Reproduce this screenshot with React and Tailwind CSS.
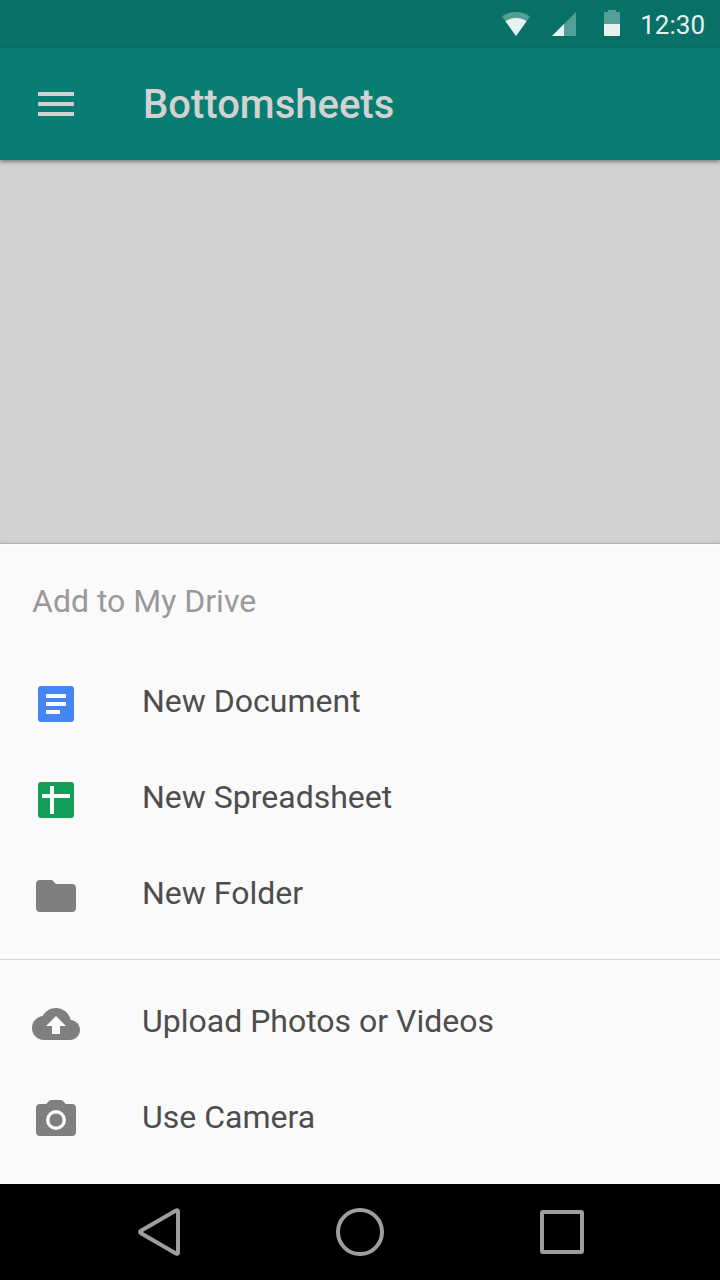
import React from "react";

function WifiIcon() {
  return (
    <svg width="28" height="24" viewBox="0 0 28 24" aria-hidden="true">
      <path d="M14 24L0 4.600C3.800 1.600 8.600 0 14 0s10.200 1.600 14 4.600z" fill="#539e97" />
      <path d="M14 24L3.400 9.200C6.400 7.100 10 6 14 6s7.600 1.100 10.600 3.200z" fill="#e6f1f0" />
    </svg>
  );
}

function SignalIcon() {
  return (
    <svg width="24" height="24" viewBox="0 0 24 24" aria-hidden="true">
      <path d="M0 24L24 0v24z" fill="#539e97" />
      <path d="M0 24L12 12v12z" fill="#e6f1f0" />
    </svg>
  );
}

function BatteryIcon() {
  return (
    <svg width="16" height="26" viewBox="0 0 16 26" aria-hidden="true">
      <path d="M4 0h8v2h3a1 1 0 0 1 1 1v11H0V3a1 1 0 0 1 1-1h3z" fill="#539e97" />
      <path d="M0 14h16v11a1 1 0 0 1-1 1H1a1 1 0 0 1-1-1z" fill="#e6f1f0" />
    </svg>
  );
}

function MenuIcon() {
  return (
    <svg width="48" height="48" viewBox="0 0 48 48" fill="#d1d1d1" aria-hidden="true">
      <path d="M6 12h36v4H6zM6 22h36v4H6zM6 32h36v4H6z" />
    </svg>
  );
}

function DocumentIcon() {
  return (
    <svg width="48" height="48" viewBox="0 0 48 48" aria-hidden="true">
      <rect x="6" y="6" width="36" height="36" rx="3" fill="#4285f4" />
      <path d="M14 14h20v4H14zM14 22h20v4H14zM14 30h14v4H14z" fill="#fafafa" />
    </svg>
  );
}

function SpreadsheetIcon() {
  return (
    <svg width="48" height="48" viewBox="0 0 48 48" aria-hidden="true">
      <rect x="6" y="6" width="36" height="36" rx="3" fill="#129e59" />
      <path d="M18 10h4v8h16v4H22v16h-4V22h-8v-4h8z" fill="#fafafa" />
    </svg>
  );
}

function FolderIcon() {
  return (
    <svg width="48" height="48" viewBox="0 0 48 48" fill="#7f7f7f" aria-hidden="true">
      <path d="M19.500 8H8a4 4 0 0 0-4 4v24a4 4 0 0 0 4 4h32a4 4 0 0 0 4-4V16a4 4 0 0 0-4-4H24l-3.400-3.400Q20 8 19.500 8z" />
    </svg>
  );
}

function UploadIcon() {
  return (
    <svg width="48" height="48" viewBox="0 0 24 24" fill="#7f7f7f" aria-hidden="true">
      <path d="M19.350 10.040C18.670 6.590 15.640 4 12 4 9.110 4 6.600 5.640 5.350 8.040 2.340 8.360 0 10.910 0 14c0 3.310 2.690 6 6 6h13c2.760 0 5-2.240 5-5 0-2.640-2.050-4.780-4.650-4.960zM14 13v4h-4v-4H7l5-5 5 5h-3z" />
    </svg>
  );
}

function CameraIcon() {
  return (
    <svg width="48" height="48" viewBox="0 0 48 48" fill="#7f7f7f" aria-hidden="true">
      <path d="M19.500 4Q18 4 17.200 4.800L14.300 8H8a4 4 0 0 0-4 4v24a4 4 0 0 0 4 4h32a4 4 0 0 0 4-4V12a4 4 0 0 0-4-4h-6.300L30.800 4.800Q30 4 28.500 4z" />
      <circle cx="24" cy="24" r="8.300" fill="none" stroke="#fafafa" strokeWidth="3.400" />
    </svg>
  );
}

const createItems = [
  { label: "New Document", Icon: DocumentIcon },
  { label: "New Spreadsheet", Icon: SpreadsheetIcon },
  { label: "New Folder", Icon: FolderIcon },
];

const uploadItems = [
  { label: "Upload Photos or Videos", Icon: UploadIcon },
  { label: "Use Camera", Icon: CameraIcon },
];

function ActionList({ items }) {
  return (
    <ul>
      {items.map(({ label, Icon }) => (
        <li key={label}>
          <button type="button" className="flex h-24 w-full items-center gap-[62px] px-8 text-left">
            <Icon />
            <span className="pb-1.5 text-[32px] leading-10 text-[#4d4d4d]">{label}</span>
          </button>
        </li>
      ))}
    </ul>
  );
}

export default function App() {
  return (
    <div className="flex min-h-screen flex-col bg-[#d2d2d2] font-['Roboto',sans-serif]">
      <div className="flex h-12 items-center justify-end bg-[#077067] pr-[15px]">
        <div className="flex w-12 justify-center"><WifiIcon /></div>
        <div className="flex w-12 justify-center"><SignalIcon /></div>
        <div className="flex w-12 justify-center pb-0.5"><BatteryIcon /></div>
        <time className="pt-0.5 pl-1 text-[26px] leading-8 text-[#e6f1f0]">12:30</time>
      </div>
      <header className="flex h-28 items-center gap-[63px] bg-[#087d72] px-8 shadow-[0_2px_4px_rgba(0,0,0,0.4)]">
        <button type="button" aria-label="Menu"><MenuIcon /></button>
        <h1 className="pt-0.5 text-[40px] leading-12 font-medium text-[#d2d2d2]">Bottomsheets</h1>
      </header>
      <main className="flex-1" />
      <section
        aria-labelledby="sheet-title"
        className="border-t border-white bg-[#fafafa] pb-4 shadow-[0_0_2px_rgba(0,0,0,0.5)]"
      >
        <h2 id="sheet-title" className="flex h-[111px] items-center px-8 text-[32px] leading-10 text-[#999999]">
          Add to My Drive
        </h2>
        <div className="border-b border-[#d4d4d4] pb-[15px]">
          <ActionList items={createItems} />
        </div>
        <div className="pt-4">
          <ActionList items={uploadItems} />
        </div>
      </section>
      <nav className="flex h-24 items-center justify-center gap-[154px] bg-black">
        <button type="button" aria-label="Back">
          <svg width="48" height="48" viewBox="0 0 48 48" fill="none" stroke="#9e9e9e" strokeWidth="4" strokeLinejoin="round">
            <path d="M44 3.500Q44 1.500 42 2.500L7 22.800Q5 24 7 25.200L42 45.500Q44 46.500 44 44.500z" />
          </svg>
        </button>
        <button type="button" aria-label="Home">
          <svg width="48" height="48" viewBox="0 0 48 48" fill="none" stroke="#9e9e9e" strokeWidth="4">
            <circle cx="24" cy="24" r="22" />
          </svg>
        </button>
        <button type="button" aria-label="Recent apps">
          <svg width="48" height="48" viewBox="0 0 48 48" fill="none" stroke="#9e9e9e" strokeWidth="4">
            <rect x="4" y="4" width="40" height="40" rx="1" />
          </svg>
        </button>
      </nav>
    </div>
  );
}
